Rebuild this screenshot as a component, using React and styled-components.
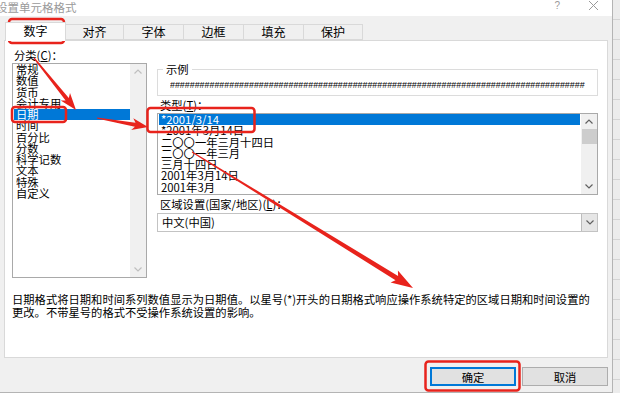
import React from "react";
import styled, { createGlobalStyle } from "styled-components";

const GlobalStyle = createGlobalStyle`
  html, body {
    margin: 0;
    padding: 0;
  }
  body {
    font-family: "Noto Sans CJK SC", "Noto Sans", sans-serif;
    color: #000;
  }
`;

const tabs = ["数字", "对齐", "字体", "边框", "填充", "保护"];
const categories = [
  "常规", "数值", "货币", "会计专用", "日期", "时间",
  "百分比", "分数", "科学记数", "文本", "特殊", "自定义",
];
const dateTypes = [
  "*2001/3/14",
  "*2001年3月14日",
  "二〇〇一年三月十四日",
  "二〇〇一年三月",
  "三月十四日",
  "2001年3月14日",
  "2001年3月",
];

// tapered arrow like a screenshot tool draws it
function arrowPoints(x1, y1, x2, y2, headL = 17, headW = 13, shaft = 4.5) {
  const dx = x2 - x1;
  const dy = y2 - y1;
  const len = Math.hypot(dx, dy);
  const ux = dx / len;
  const uy = dy / len;
  const nx = -uy;
  const ny = ux;
  const bx = x2 - ux * headL;
  const by = y2 - uy * headL;
  const back = 3;
  const pt = (x, y, w) => `${(x + nx * w).toFixed(1)},${(y + ny * w).toFixed(1)}`;
  return [
    pt(x1, y1, 0.6),
    pt(bx + ux * back, by + uy * back, shaft / 2),
    pt(bx, by, headW / 2),
    `${x2},${y2}`,
    pt(bx, by, -headW / 2),
    pt(bx + ux * back, by + uy * back, -shaft / 2),
    pt(x1, y1, -0.6),
  ].join(" ");
}

export default function App() {
  return (
    <Page>
      <GlobalStyle />
      <Window>
        <TitleBar>
          <Title>设置单元格格式</Title>
          <TitleIcons>
            <Help>?</Help>
            <svg width="11" height="11" viewBox="0 0 11 11">
              <path d="M1 1 L10 10 M10 1 L1 10" stroke="#9a9a9a" strokeWidth="1" />
            </svg>
          </TitleIcons>
        </TitleBar>
        <Body>
          <TabBar>
            {tabs.map((t, i) => (
              <Tab key={t} $active={i === 0}>
                {t}
              </Tab>
            ))}
          </TabBar>
          <Panel>
            <Columns>
              <LeftCol>
                <FieldLabel>
                  分类(<u>C</u>)：
                </FieldLabel>
                <ListBox $height={215}>
                  <Rows>
                    {categories.map((c) => (
                      <Row key={c} $selected={c === "日期"}>
                        {c}
                      </Row>
                    ))}
                  </Rows>
                  <ScrollBar>
                    <Chevron $up $disabled />
                    <Track />
                    <Chevron $disabled />
                  </ScrollBar>
                </ListBox>
              </LeftCol>
              <RightCol>
                <GroupBox>
                  <Legend>示例</Legend>
                  <Hashes>{"#".repeat(84)}</Hashes>
                </GroupBox>
                <FieldLabel $indent>
                  类型(<u>T</u>)：
                </FieldLabel>
                <ListBox $height={82}>
                  <Rows $typeList>
                    {dateTypes.map((d, i) => (
                      <Row key={d} $selected={i === 0}>
                        {d}
                      </Row>
                    ))}
                  </Rows>
                  <ScrollBar>
                    <Chevron $up />
                    <Track>
                      <Thumb />
                    </Track>
                    <Chevron />
                  </ScrollBar>
                </ListBox>
                <FieldLabel $indent>
                  区域设置(国家/地区)(<u>L</u>)：
                </FieldLabel>
                <Select>
                  <SelectValue>中文(中国)</SelectValue>
                  <SelectButton>
                    <Chevron />
                  </SelectButton>
                </Select>
              </RightCol>
            </Columns>
            <Description>
              日期格式将日期和时间系列数值显示为日期值。以星号(*)开头的日期格式响应操作系统特定的区域日期和时间设置的
              <br />
              更改。不带星号的格式不受操作系统设置的影响。
            </Description>
          </Panel>
          <ButtonRow>
            <Button $primary>确定</Button>
            <Button>取消</Button>
          </ButtonRow>
        </Body>
      </Window>
      <SheetStrip />
      <Annotations width="620" height="393" viewBox="0 0 620 393">
        <g fill="none" stroke="#e8231c" strokeWidth="2.5">
          <rect x="9" y="19" width="55" height="24" rx="3" />
          <rect x="12" y="107" width="54" height="15" rx="3" />
          <rect x="147.5" y="108" width="107" height="24" rx="3" />
          <rect x="425.5" y="361.5" width="94" height="29" rx="3" />
        </g>
        <g fill="#e8231c">
          <polygon points={arrowPoints(34, 58, 76, 110, 17, 12, 4)} />
          <polygon points={arrowPoints(97, 118, 148, 127, 16, 12, 4)} />
          <polygon points={arrowPoints(192, 152, 413, 288, 22, 14, 5)} />
        </g>
      </Annotations>
    </Page>
  );
}

const Page = styled.div`
  position: relative;
  display: flex;
  width: 620px;
  height: 393px;
  overflow: hidden;
  background: #e6e6e6;
`;

const Window = styled.div`
  display: flex;
  flex-direction: column;
  width: 612px;
  height: 392px;
  background: #f0f0f0;
  border-right: 1px solid #b4b4b4;
  border-bottom: 1px solid #b4b4b4;
`;

const TitleBar = styled.div`
  display: flex;
  align-items: center;
  justify-content: space-between;
  height: 16px;
  background: #ffffff;
`;

const Title = styled.div`
  margin-left: -4px;
  margin-top: -3px;
  font-size: 11.5px;
  line-height: 14px;
  color: #9a9a9a;
`;

const TitleIcons = styled.div`
  display: flex;
  align-items: center;
  gap: 28px;
  margin-right: 13px;
  margin-top: -6px;
`;

const Help = styled.span`
  font-family: "Liberation Sans", sans-serif;
  font-size: 10px;
  color: #9a9a9a;
`;

const Body = styled.div`
  display: flex;
  flex-direction: column;
  padding: 0 4px 0 4px;
`;

const TabBar = styled.div`
  display: flex;
  align-items: flex-end;
  height: 24px;
  padding-left: 1px;
`;

const Tab = styled.div`
  position: relative;
  display: flex;
  align-items: center;
  justify-content: center;
  box-sizing: border-box;
  width: ${(p) => (p.$active ? 61 : 60)}px;
  height: ${(p) => (p.$active ? 19 : 16)}px;
  margin-bottom: ${(p) => (p.$active ? -1 : 0)}px;
  padding-bottom: ${(p) => (p.$active ? 3 : 0)}px;
  background: ${(p) => (p.$active ? "#ffffff" : "#f0f0f0")};
  border: 1px solid #d9d9d9;
  border-bottom: ${(p) => (p.$active ? "none" : "1px solid #d9d9d9")};
  border-left: ${(p) => (p.$active ? "1px solid #d9d9d9" : "none")};
  font-size: 12px;
  line-height: 14px;
  z-index: ${(p) => (p.$active ? 1 : 0)};

  &:nth-child(2) {
    width: 58px;
  }
  &:last-child {
    width: 59px;
  }
`;

const Panel = styled.div`
  display: flex;
  flex-direction: column;
  box-sizing: border-box;
  width: 604px;
  height: 318px;
  background: #ffffff;
  border: 1px solid #d9d9d9;
  padding: 6px 9px 0 7px;
`;

const Columns = styled.div`
  display: flex;
  gap: 10px;
  height: 231px;
`;

const LeftCol = styled.div`
  display: flex;
  flex-direction: column;
  width: 135px;
`;

const RightCol = styled.div`
  display: flex;
  flex-direction: column;
  width: 441px;
`;

const FieldLabel = styled.div`
  height: 16px;
  margin-top: ${(p) => (p.$indent ? 1 : 0)}px;
  padding-left: ${(p) => (p.$indent ? 3 : 2)}px;
  font-size: 11.3px;
  line-height: 16px;
  white-space: nowrap;

  u {
    text-decoration-thickness: 1px;
    text-underline-offset: 1px;
  }
`;

const ListBox = styled.div`
  display: flex;
  box-sizing: border-box;
  height: ${(p) => p.$height}px;
  border: 1px solid #a9a9a9;
  background: #ffffff;
`;

const Rows = styled.div`
  flex: 1;
  overflow: hidden;
  padding: ${(p) => (p.$typeList ? "0 1px 0 1px" : "0 0 0 1px")};
`;

const Row = styled.div`
  height: 11.25px;
  padding-left: 2px;
  font-size: 11.3px;
  line-height: 11.25px;
  white-space: nowrap;
  color: ${(p) => (p.$selected ? "#ffffff" : "#000000")};
  background: ${(p) => (p.$selected ? "#0078d7" : "transparent")};
`;

const ScrollBar = styled.div`
  display: flex;
  flex-direction: column;
  width: 16px;
  background: #f0f0f0;
`;

const Track = styled.div`
  flex: 1;
`;

const Thumb = styled.div`
  width: 15px;
  height: 15px;
  margin: 0 auto;
  background: #cdcdcd;
`;

const ChevronBox = styled.div`
  display: flex;
  align-items: center;
  justify-content: center;
  height: 15px;
`;

function Chevron({ $up, $disabled }) {
  return (
    <ChevronBox>
      <svg width="8" height="5" viewBox="0 0 8 5">
        <path
          d={$up ? "M0.5 4.5 L4 1 L7.5 4.5" : "M0.5 0.5 L4 4 L7.5 0.5"}
          fill="none"
          stroke={$disabled ? "#bfbfbf" : "#606060"}
          strokeWidth="1.2"
        />
      </svg>
    </ChevronBox>
  );
}

const GroupBox = styled.div`
  position: relative;
  box-sizing: border-box;
  height: 27px;
  margin-top: 22px;
  padding: 10px 0 0 12px;
  border: 1px solid #dcdcdc;
`;

const Legend = styled.span`
  position: absolute;
  top: -8px;
  left: 5px;
  padding: 0 3px;
  background: #ffffff;
  font-size: 11.3px;
  line-height: 14px;
`;

const Hashes = styled.div`
  width: 420px;
  font-family: "Liberation Sans", sans-serif;
  font-size: 8.9px;
  line-height: 10px;
  color: #000;
  white-space: nowrap;
  overflow: hidden;
`;

const Select = styled.div`
  display: flex;
  box-sizing: border-box;
  height: 19px;
  margin-top: 1px;
  border: 1px solid #c3c3c3;
  background: #ffffff;
`;

const SelectValue = styled.div`
  flex: 1;
  padding-left: 4px;
  font-size: 11.3px;
  line-height: 17px;
`;

const SelectButton = styled.div`
  display: flex;
  align-items: center;
  justify-content: center;
  box-sizing: border-box;
  width: 16px;
  background: #e6e6e6;
  border-left: 1px solid #bcbcbc;
`;

const Description = styled.div`
  margin-top: 15px;
  font-size: 11.3px;
  line-height: 13px;
  white-space: nowrap;
`;

const ButtonRow = styled.div`
  display: flex;
  justify-content: flex-end;
  gap: 6px;
  margin-top: 9px;
`;

const Button = styled.div`
  display: flex;
  align-items: center;
  justify-content: center;
  box-sizing: border-box;
  width: 86px;
  height: 19px;
  background: #e1e1e1;
  border: 1px solid ${(p) => (p.$primary ? "#0078d7" : "#adadad")};
  box-shadow: ${(p) => (p.$primary ? "inset 0 0 0 1px #0078d7" : "none")};
  font-size: 11.3px;
  line-height: 14px;
`;

const SheetStrip = styled.div`
  flex: 1;
  background: repeating-linear-gradient(
    to bottom,
    #ececec 0px,
    #ececec 19px,
    #d4d4d4 19px,
    #d4d4d4 20px
  );
`;

const Annotations = styled.svg`
  position: absolute;
  left: 0;
  top: 0;
  pointer-events: none;
`;
